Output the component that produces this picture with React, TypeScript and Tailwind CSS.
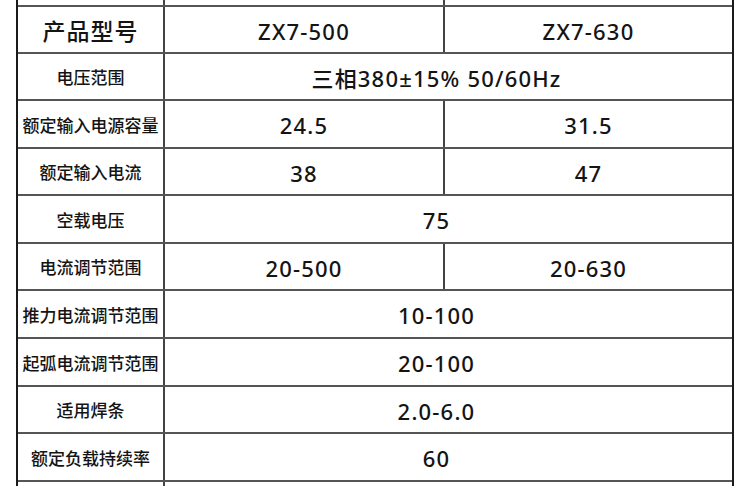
import React from "react";

type Row = {
  label: string;
  a: string;
  b?: string;
  h: string;
  header?: boolean;
};

const rows: Row[] = [
  { label: "产品型号", a: "ZX7-500", b: "ZX7-630", h: "h-[47px]", header: true },
  { label: "电压范围", a: "三相380±15% 50/60Hz", h: "h-[47px]" },
  { label: "额定输入电源容量", a: "24.5", b: "31.5", h: "h-[48px]" },
  { label: "额定输入电流", a: "38", b: "47", h: "h-[47px]" },
  { label: "空载电压", a: "75", h: "h-[48px]" },
  { label: "电流调节范围", a: "20-500", b: "20-630", h: "h-[47px]" },
  { label: "推力电流调节范围", a: "10-100", h: "h-[48px]" },
  { label: "起弧电流调节范围", a: "20-100", h: "h-[48px]" },
  { label: "适用焊条", a: "2.0-6.0", h: "h-[47px]" },
  { label: "额定负载持续率", a: "60", h: "h-[48px]" },
];

export default function App() {
  return (
    <div className="w-[750px] h-[486px] overflow-hidden bg-white pl-[16px] font-['Noto_Sans','Noto_Sans_CJK_SC',sans-serif] font-medium text-[#141414]">
      <div className="w-[718px] border-x-2 border-[#1a1a1a] flex flex-col">
        <div className="h-[5px] flex shrink-0">
          <div className="w-[147px] border-r-2 border-[#444]" />
          <div className="w-[280px] border-r-2 border-[#444]" />
          <div className="flex-1" />
        </div>
        {rows.map((r) => (
          <div
            key={r.label}
            className={`${r.h} shrink-0 flex border-t-2 border-[#555]`}
          >
            <div
              className={`w-[147px] border-r-2 border-[#444] flex items-center justify-center pt-[3px] ${
                r.header ? "text-[23px] tracking-[1px]" : "text-[17px]"
              }`}
            >
              {r.label}
            </div>
            {r.b !== undefined ? (
              <>
                <div className="w-[280px] border-r-2 border-[#444] flex items-center justify-center pt-[3px] text-[22px] tracking-[1.2px]">
                  {r.a}
                </div>
                <div className="flex-1 flex items-center justify-center pt-[3px] text-[22px] tracking-[1.2px]">
                  {r.b}
                </div>
              </>
            ) : (
              <div className="flex-1 flex items-center justify-center pt-[3px] pr-[24px] text-[22px] tracking-[1.2px] whitespace-pre">
                {r.a}
              </div>
            )}
          </div>
        ))}
        <div className="h-[10px] shrink-0 flex border-t-2 border-[#555]">
          <div className="w-[147px] border-r-2 border-[#444]" />
          <div className="flex-1" />
        </div>
      </div>
    </div>
  );
}
